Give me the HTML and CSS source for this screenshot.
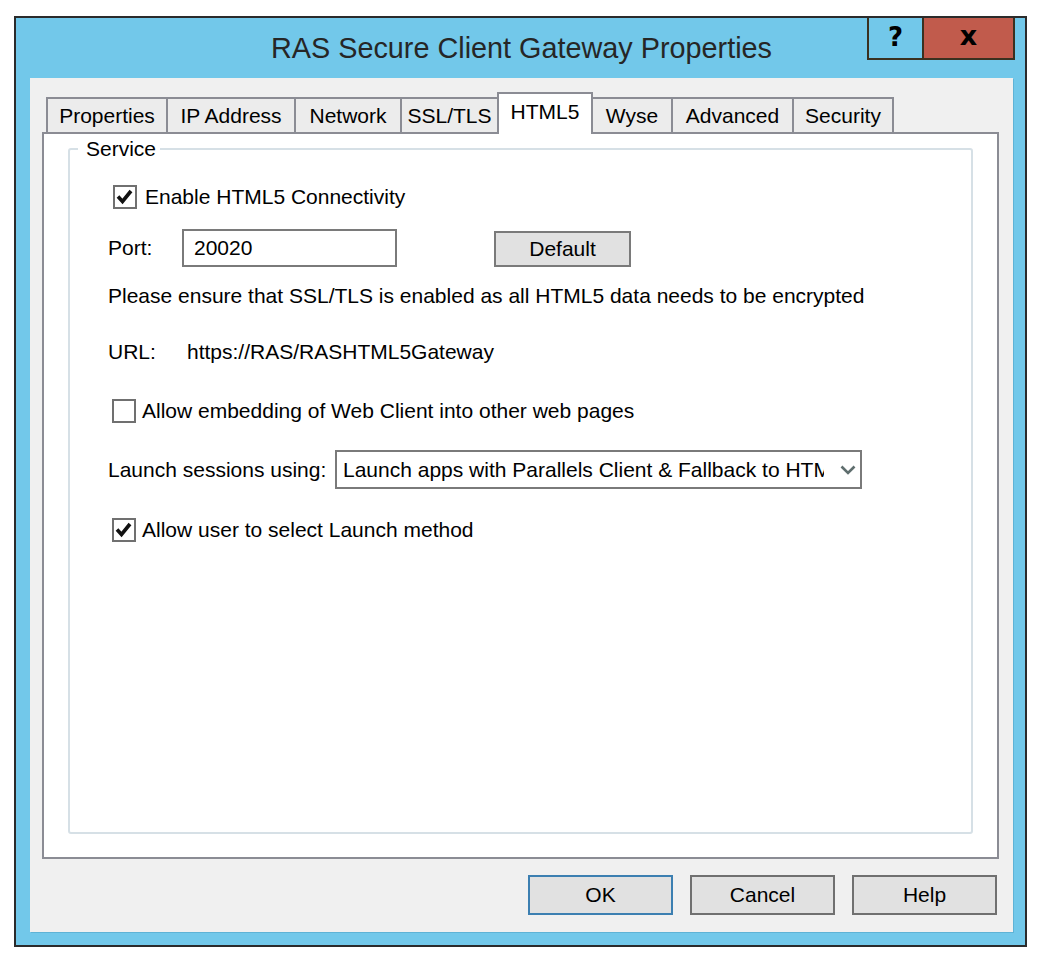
FILE: index.html
```html
<!DOCTYPE html>
<html lang="en">
<head>
    <meta charset="UTF-8">
    <meta name="viewport" content="width=device-width, initial-scale=1.0">
    <title>RAS Secure Client Gateway Properties</title>
    <link rel="stylesheet" href="styles.css">
</head>
<body>

    <div class="window">
        <div class="titlebar">
            <span></span>
            <h1 class="title">RAS Secure Client Gateway Properties</h1>
            <div class="caption-buttons">
                <button class="cap-help">?</button>
                <button class="cap-close">x</button>
            </div>
        </div>

        <div class="client">
            <div class="tabs">
                <div class="tab tab-properties">Properties</div>
                <div class="tab tab-ip">IP Address</div>
                <div class="tab tab-network">Network</div>
                <div class="tab tab-ssl">SSL/TLS</div>
                <div class="tab tab-html5 active">HTML5</div>
                <div class="tab tab-wyse">Wyse</div>
                <div class="tab tab-advanced">Advanced</div>
                <div class="tab tab-security">Security</div>
            </div>

            <div class="panel">
                <fieldset class="group">
                    <legend>Service</legend>
                    <div class="group-body">

                        <div class="row check-row first-check">
                            <span class="checkbox">
                                <svg viewBox="0 0 20 20"><path d="M3 9.5 L7.5 14.5 L16 4"/></svg>
                            </span>
                            <span>Enable HTML5 Connectivity</span>
                        </div>

                        <div class="row port-row">
                            <span class="label port-label">Port:</span>
                            <div class="textbox">20020</div>
                            <button class="btn btn-default">Default</button>
                        </div>

                        <p class="note">Please ensure that SSL/TLS is enabled as all HTML5 data needs to be encrypted</p>

                        <div class="row url-row">
                            <span class="label url-label">URL:</span>
                            <span>https://RAS/RASHTML5Gateway</span>
                        </div>

                        <div class="row check-row embed-row">
                            <span class="checkbox"></span>
                            <span>Allow embedding of Web Client into other web pages</span>
                        </div>

                        <div class="row launch-row">
                            <span class="label launch-label">Launch sessions using:</span>
                            <div class="combo">
                                <span class="combo-text">Launch apps with Parallels Client &amp; Fallback to HTML5</span>
                                <svg class="chevron" viewBox="0 0 16 10"><path d="M1.5 1.5 L8 8 L14.5 1.5"/></svg>
                            </div>
                        </div>

                        <div class="row check-row select-row">
                            <span class="checkbox">
                                <svg viewBox="0 0 20 20"><path d="M3 9.5 L7.5 14.5 L16 4"/></svg>
                            </span>
                            <span>Allow user to select Launch method</span>
                        </div>

                    </div>
                </fieldset>
            </div>

            <div class="actions">
                <button class="btn btn-action btn-ok">OK</button>
                <button class="btn btn-action">Cancel</button>
                <button class="btn btn-action">Help</button>
            </div>
        </div>
    </div>

</body>
</html>
```

FILE: styles.css
```css
body {
    margin: 0;
    background-color: #ffffff;
    font-family: "Liberation Sans", Arial, sans-serif;
    font-size: 21px;
    color: #000;
}

.window {
    box-sizing: border-box;
    width: 1013px;
    height: 931px;
    margin: 16px 0 0 14px;
    border: 2px solid #2b2b2b;
    background-color: #72c8ea;
    padding: 0 12px 13px 14px;
    display: flex;
    flex-direction: column;
}

/* title bar */
.titlebar {
    height: 60px;
    display: grid;
    grid-template-columns: 1fr auto 1fr;
    align-items: center;
}

.title {
    margin: 0;
    font-size: 28.8px;
    font-weight: normal;
    color: #262626;
    white-space: nowrap;
}

.caption-buttons {
    justify-self: end;
    align-self: start;
    display: flex;
    margin-right: -2px;
}

.caption-buttons button {
    box-sizing: border-box;
    height: 42px;
    border: none;
    border-bottom: 2px solid #3a3120;
    border-left: 2px solid #3a3120;
    font-family: "DejaVu Sans", sans-serif;
    font-weight: bold;
    color: #000;
    padding: 0;
}

.cap-help {
    width: 55px;
    background-color: #72c8ea;
    font-size: 26px;
    padding-bottom: 2px !important;
}

.cap-close {
    width: 93px;
    background-color: #c15b4c;
    border-right: 2px solid #3a3120 !important;
    font-size: 27px;
    padding-bottom: 6px !important;
}

/* client area */
.client {
    flex: 1;
    background-color: #f0f0f0;
    padding: 14px 14px 17px 12px;
    display: flex;
    flex-direction: column;
    box-shadow: 1px 1px 0 #5fb3d6;
}

.tabs {
    height: 40px;
    display: flex;
    align-items: flex-end;
    padding-left: 4px;
}

.tab {
    box-sizing: border-box;
    height: 35px;
    border-top: 2px solid #8b8c94;
    border-left: 2px solid #8b8c94;
    background-color: #ececec;
    display: flex;
    align-items: center;
    justify-content: center;
    white-space: nowrap;
}

.tab-properties { width: 120px; }
.tab-ip { width: 128px; }
.tab-network { width: 106px; }
.tab-ssl { width: 97px; }
.tab-wyse { width: 80px; }
.tab-advanced { width: 121px; }
.tab-security { width: 102px; border-right: 2px solid #8b8c94; }

.tab.active {
    width: 96px;
    height: 42px;
    margin-bottom: -2px;
    margin-right: -2px;
    border-right: 2px solid #8b8c94;
    background-color: #ffffff;
    padding-bottom: 4px;
    position: relative;
    z-index: 1;
}

.panel {
    flex: 1;
    border: 2px solid #8b8c94;
    background-color: #ffffff;
    padding: 3px 24px 23px 24px;
    display: flex;
    flex-direction: column;
}

.group {
    flex: 1;
    margin: 0;
    padding: 0;
    border: 2px solid #d6e0e6;
    border-radius: 3px;
}

.group legend {
    margin-left: 8px;
    padding: 0 4px 0 8px;
    line-height: 24px;
}

.group-body {
    padding: 24px 0 0 38px;
    display: flex;
    flex-direction: column;
}

.row {
    display: flex;
    align-items: center;
}

.check-row {
    height: 24px;
    gap: 6px;
}

.checkbox {
    box-sizing: border-box;
    width: 24px;
    height: 24px;
    margin-left: 4px;
    border: 2px solid #707070;
    background-color: #ffffff;
    display: flex;
}

.checkbox svg {
    width: 20px;
    height: 20px;
}

.checkbox path {
    fill: none;
    stroke: #111;
    stroke-width: 3.6;
}

.first-check {
    gap: 8px;
}

.first-check .checkbox {
    margin-left: 5px;
}

.port-row {
    margin-top: 20px;
    height: 38px;
    align-items: flex-end;
}

.port-row .label {
    align-self: center;
}

.port-label { width: 74px; }
.url-label { width: 79px; }
.launch-label { width: 227px; }

.textbox {
    box-sizing: border-box;
    width: 215px;
    height: 38px;
    border: 2px solid #7a7a7a;
    background-color: #ffffff;
    padding-left: 10px;
    display: flex;
    align-items: center;
}

.btn {
    box-sizing: border-box;
    background-color: #e1e1e1;
    border: 2px solid #7a7a7a;
    font-family: "Liberation Sans", Arial, sans-serif;
    font-size: 21px;
    color: #000;
    padding: 0;
}

.btn-default {
    width: 137px;
    height: 36px;
    margin-left: 97px;
}

.note {
    margin: 17px 0 0 0;
    line-height: 24px;
}

.url-row {
    margin-top: 32px;
    height: 24px;
}

.embed-row {
    margin-top: 35px;
}

.launch-row {
    margin-top: 27px;
    height: 39px;
}

.combo {
    box-sizing: border-box;
    width: 527px;
    height: 39px;
    border: 2px solid #7a7a7a;
    background-color: #ffffff;
    padding-left: 6px;
    display: flex;
    align-items: center;
}

.combo-text {
    width: 481px;
    overflow: hidden;
    white-space: nowrap;
}

.chevron {
    width: 16px;
    height: 10px;
    margin-left: 16px;
}

.chevron path {
    fill: none;
    stroke: #5f6e6e;
    stroke-width: 2.6;
}

.select-row {
    margin-top: 29px;
}

/* dialog buttons */
.actions {
    margin-top: 16px;
    padding-right: 2px;
    display: flex;
    justify-content: flex-end;
    gap: 17px;
}

.btn-action {
    width: 145px;
    height: 40px;
    border-color: #707070;
}

.btn-ok {
    border-color: #3c7fb1;
}
```
